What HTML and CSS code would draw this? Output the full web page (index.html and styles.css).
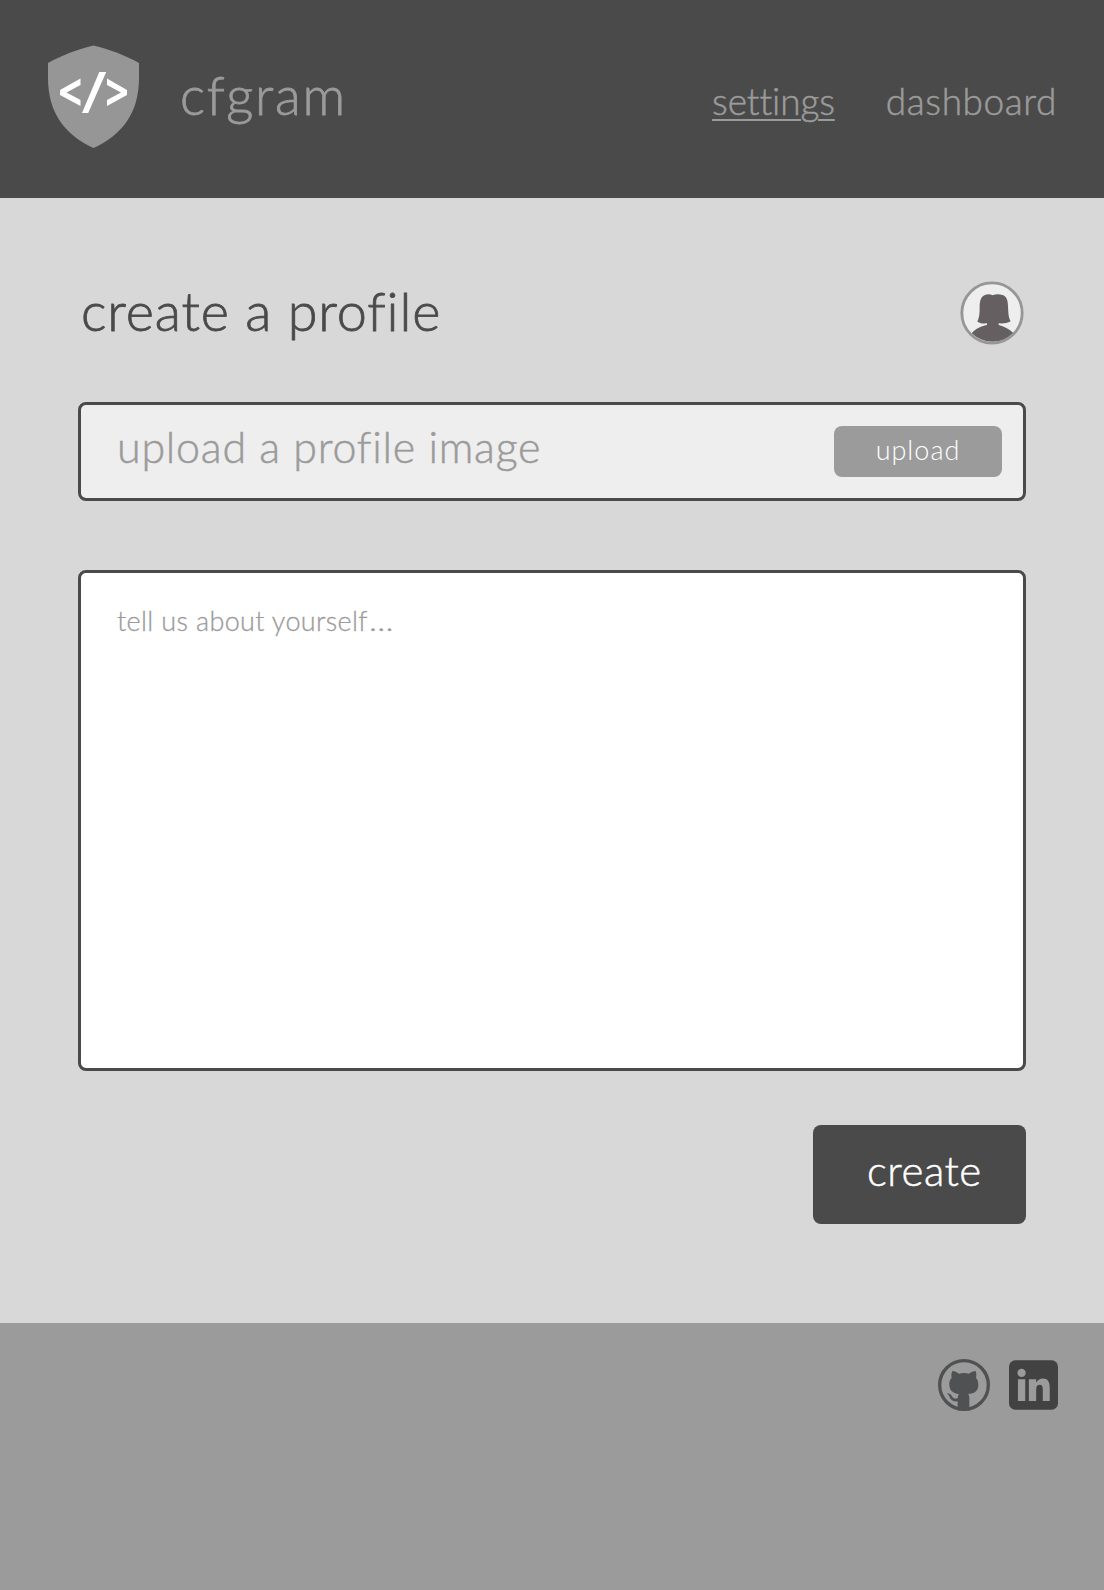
FILE: index.html
```html
<!DOCTYPE html>
<html lang="en">
<head>
<meta charset="utf-8">
<title>cfgram</title>
<link rel="stylesheet" href="styles.css">
</head>
<body>
<header class="header">
  <svg class="logo" viewBox="0 0 92 104" aria-hidden="true">
    <path fill="#969696" d="M45.5.4C61 4 78 10.500 91 18V33C91 68 74 90 45.500 103 17 90 0 68 0 33V18C13 10.500 30 4 45.500.4Z"/>
    <path fill="#fff" d="M32.500 33.500 12 45V50L32.500 61V55L18.500 47.400 32.500 40ZM51.300 27H58.200L40.200 68H34ZM59 33.500 79 45V50L59 61V55L73 47.400 59 40Z"/>
  </svg>
  <span class="brand">cfgram</span>
  <nav class="nav">
    <a class="link settings active">settings</a>
    <a class="link dashboard">dashboard</a>
  </nav>
</header>
<main class="main">
  <div class="heading">
    <h1 class="title">create a profile</h1>
    <svg class="avatar" viewBox="60 48 192 192" aria-hidden="true">
      <circle cx="156" cy="144" r="90" fill="#eee"/>
      <path fill="#655f61" d="M158 91C151 87 142 86 135 90 122 95 119 109 119 126 119 145 118 158 112 170 121 175 131 176 141 175V180C122 184 106 191 95 205A91 91 0 0 0 221 205C207 191 192 184 176 180V175C188 176 202 175 212 169 205 157 205 144 204 124 204 106 200 94 187 90 177 86 166 87 158 91Z"/>
      <circle cx="156" cy="144" r="90.500" fill="none" stroke="#969696" stroke-width="8.500"/>
    </svg>
  </div>
  <div class="field">
    <span class="hint">upload a profile image</span>
    <span class="upload">upload</span>
  </div>
  <div class="about">tell us about yourself<span class="dots">…</span></div>
  <div class="create"><span>create</span></div>
</main>
<footer class="footer">
  <svg class="github" viewBox="54 147 156 156" aria-hidden="true">
    <circle cx="132" cy="225" r="73" fill="none" stroke="#505153" stroke-width="10"/>
    <path fill="#505153" d="M97 183C94 190 93 197 95 203 89 210 87 217 88 225 89 242 98 250 117 252 114 256 113 260 113 265 100 269 98 262 94 256 91 252 87 250 81 251 88 254 88 260 92 267 96 273 103 275 113 274V298H148V265C148 259 147 255 144 252 165 250 175 243 175 224 175 216 173 209 168 203 170 196 169 189 167 183 160 183 153 186 147 191 137 188 126 188 116 191 110 186 104 183 97 183Z"/>
  </svg>
  <svg class="linkedin" viewBox="267 150 148 149" aria-hidden="true">
    <rect x="267" y="150" width="148" height="149" rx="19" fill="#424242"/>
    <g fill="#9b9b9b">
      <circle cx="305" cy="188" r="12.500"/>
      <path d="M294 207H316V273H294ZM327 207H349V217C354 209 361 205 370 205 384 205 390 215 390 233V273H369V238C369 228 366 224 360 224 352 224 349 229 349 239V273H327Z"/>
    </g>
  </svg>
</footer>
</body>
</html>
```
FILE: styles.css
```css
* { box-sizing: border-box; }
body {
  margin: 0;
  font-family: Lato, "Open Sans", sans-serif;
  font-weight: 300;
  font-variant-ligatures: none;
  color: #4a4a4a;
  background: #9b9b9b;
  white-space: nowrap;
}
.header {
  display: flex;
  height: 198px;
  padding: 45px 47px 0 48px;
  background: #4a4a4a;
  color: #9b9b9b;
}
.logo { width: 92px; height: 104px; }
.brand {
  margin: 20px 0 0 40px;
  font-size: 53px;
  line-height: 60px;
  letter-spacing: 1.8px;
  -webkit-text-stroke: .8px;
}
.nav {
  display: flex;
  gap: 51px;
  margin: 35px 0 0 auto;
}
.link {
  font-size: 37px;
  line-height: 41px;
  -webkit-text-stroke: .5px;
}
.settings { letter-spacing: -.1px; }
.dashboard { letter-spacing: .6px; }
.active {
  text-decoration: underline;
  text-decoration-thickness: 2px;
  text-underline-offset: 4px;
}
.main {
  height: 1125px;
  padding: 83px 78px 0;
  background: #d8d8d8;
}
.heading {
  display: flex;
  justify-content: space-between;
  height: 121px;
  padding: 0 2px 0 3px;
}
.title {
  margin: 0;
  font-size: 54px;
  font-weight: 300;
  line-height: 60px;
  letter-spacing: .85px;
  -webkit-text-stroke: .8px;
}
.avatar { width: 64px; height: 64px; }
.field {
  display: flex;
  justify-content: space-between;
  height: 99px;
  padding: 21px 21px 0 36px;
  border: 3px solid #4a4a4a;
  border-radius: 8px;
  background: #eee;
  color: #9b9b9b;
}
.hint {
  font-size: 43px;
  line-height: 42px;
  letter-spacing: .75px;
  -webkit-text-stroke: .5px;
}
.upload {
  width: 168px;
  height: 51px;
  border-radius: 8px;
  background: #9b9b9b;
  color: #fff;
  font-size: 27px;
  line-height: 47px;
  letter-spacing: 1px;
  text-align: center;
}
.about {
  height: 501px;
  margin-top: 69px;
  padding: 32px 36px;
  border: 3px solid #4a4a4a;
  border-radius: 8px;
  background: #fff;
  color: #9b9b9b;
  font-size: 27px;
  line-height: 32px;
  letter-spacing: .35px;
  -webkit-text-stroke: .3px;
}
.dots {
  display: inline-block;
  margin-left: 1px;
  transform: scaleX(1.25);
  transform-origin: left;
}
.create {
  width: 213px;
  height: 99px;
  margin: 54px 0 0 auto;
  padding-left: 54px;
  border-radius: 8px;
  background: #4a4a4a;
  color: #fff;
  font-size: 42px;
  line-height: 91px;
  letter-spacing: .5px;
  -webkit-text-stroke: .5px;
}
.footer {
  display: flex;
  justify-content: flex-end;
  gap: 19px;
  height: 267px;
  padding: 36px 46px 0 0;
}
.github { width: 52px; height: 52px; }
.linkedin { width: 49px; height: 50px; margin-top: 1px; }
```
